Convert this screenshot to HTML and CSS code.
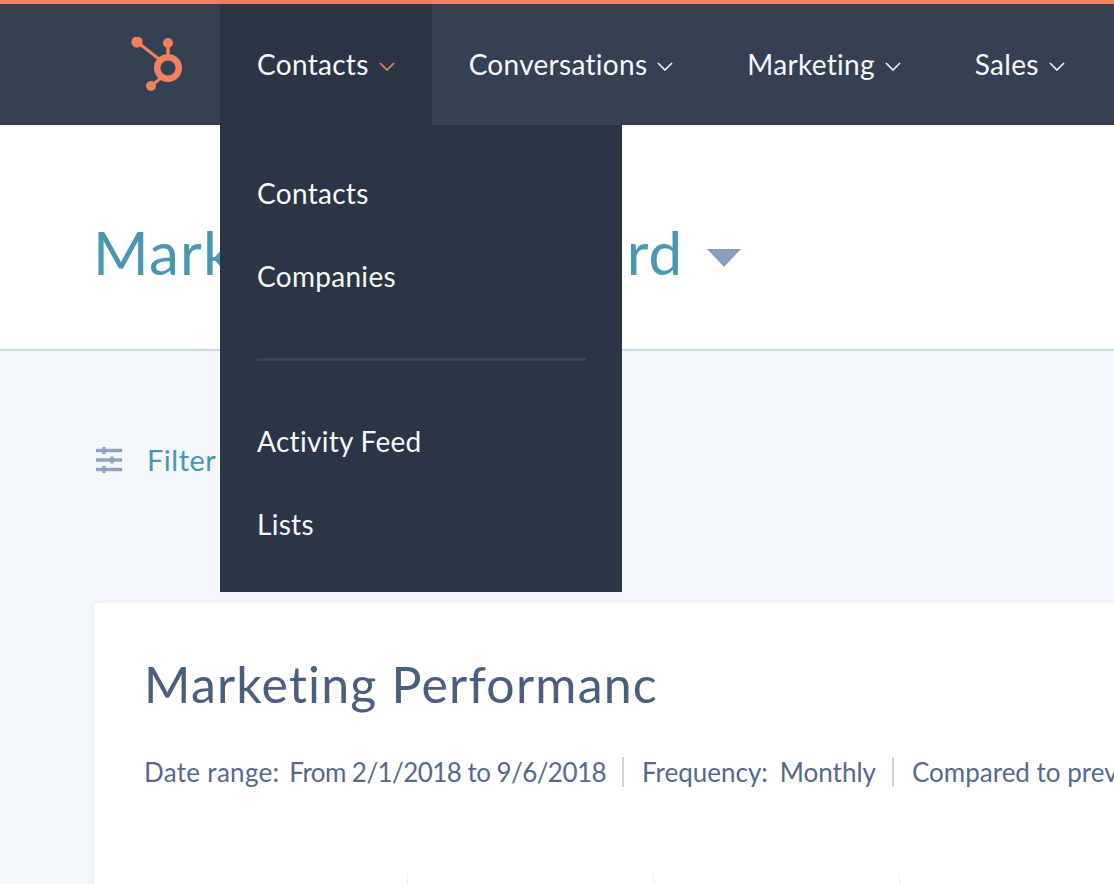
FILE: index.html
```html
<!DOCTYPE html>
<html lang="en">
<head>
<meta charset="utf-8">
<title>Marketing Dashboard</title>
<link rel="stylesheet" href="styles.css">
</head>
<body>
<header class="nav">
  <div class="nav-logo">
    <svg class="logo" width="56" height="56" viewBox="0 0 56 56">
      <g fill="#f2805f" stroke="none">
        <circle cx="7" cy="5" r="5.6"/>
        <circle cx="38" cy="6" r="5"/>
        <circle cx="21" cy="49" r="5"/>
      </g>
      <g stroke="#f2805f" fill="none">
        <path d="M7 5 29 22" stroke-width="3"/>
        <path d="M38 6V20" stroke-width="3.4"/>
        <path d="M21 49 31 41" stroke-width="3"/>
        <circle cx="38" cy="31" r="10.8" stroke-width="6.4"/>
      </g>
    </svg>
  </div>
  <div class="nav-item active">
    <span>Contacts</span>
    <svg class="chev" width="16" height="9" viewBox="0 0 16 9"><path d="M1 1l7 7 7-7"/></svg>
    <div class="menu">
      <a class="menu-item">Contacts</a>
      <a class="menu-item">Companies</a>
      <div class="menu-divider"></div>
      <a class="menu-item">Activity Feed</a>
      <a class="menu-item">Lists</a>
    </div>
  </div>
  <div class="nav-item">
    <span>Conversations</span>
    <svg class="chev" width="16" height="9" viewBox="0 0 16 9"><path d="M1 1l7 7 7-7"/></svg>
  </div>
  <div class="nav-item">
    <span>Marketing</span>
    <svg class="chev" width="16" height="9" viewBox="0 0 16 9"><path d="M1 1l7 7 7-7"/></svg>
  </div>
  <div class="nav-item">
    <span>Sales</span>
    <svg class="chev" width="16" height="9" viewBox="0 0 16 9"><path d="M1 1l7 7 7-7"/></svg>
  </div>
</header>

<section class="title-bar">
  <h1 class="page-title">Marketing Dashboard</h1>
  <svg class="caret" width="34" height="18" viewBox="0 0 34 18"><path d="M0 0H34L17 18Z"/></svg>
</section>

<main class="content">
  <div class="filter-row">
    <svg class="filter-icon" width="26" height="26" viewBox="0 0 26 26">
      <path d="M0 3.5H26M0 13H26M0 22.5H26"/>
      <path class="knob" d="M8 0V7M16 9.5V16.5M8 19V26"/>
    </svg>
    <span class="filter-label">Filter</span>
  </div>
  <article class="card">
    <h2 class="card-title">Marketing Performanc</h2>
    <div class="meta">
      <span><span class="meta-label">Date range:</span><span class="meta-date">From 2/1/2018 to 9/6/2018</span></span>
      <span class="meta-item">Frequency:<span class="meta-value">Monthly</span></span>
      <span class="meta-item">Compared to previous period</span>
    </div>
    <div class="ticks">
      <i class="tick"></i><i class="tick"></i><i class="tick"></i>
    </div>
  </article>
</main>
</body>
</html>
```

FILE: styles.css
```css
* { box-sizing: border-box; }
html, body { height: 100%; }
body {
  margin: 0;
  overflow: hidden;
  background: #f5f8fa;
  font-family: "Lato", "Open Sans", sans-serif;
}
.nav {
  display: flex;
  height: 125px;
  background: #334152;
  border-top: 4px solid #f2805f;
  color: #f5f8fa;
  font-size: 28px;
  letter-spacing: .3px;
  white-space: nowrap;
}
.nav-logo {
  width: 220px;
  display: flex;
  align-items: flex-start;
  padding: 33px 0 0 130px;
}
.logo { display: block; }
.nav-item {
  position: relative;
  display: flex;
  align-items: center;
  gap: 10px;
  padding: 0 37px 2px;
}
.nav-item.active { background: #2a3646; }
.chev { display: block; margin-top: 6px; }
.chev path { fill: none; stroke: #eaf0f6; stroke-width: 1.7; }
.active .chev path { stroke: #f2805f; }
.menu {
  position: absolute;
  top: 121px;
  left: 0;
  width: 402px;
  padding: 27px 36px 27px 37px;
  background: #2a3646;
  z-index: 2;
}
.menu-item {
  display: flex;
  align-items: center;
  height: 82.5px;
}
.menu-divider {
  height: 3px;
  margin: 41px 0 39px;
  background: #34465a;
}
.title-bar {
  display: flex;
  align-items: center;
  height: 226px;
  padding: 30px 0 0 93px;
  background: #fff;
  border-bottom: 2px solid #cbd6e2;
}
.page-title {
  margin: 0;
  font-size: 60px;
  font-weight: 400;
  letter-spacing: 1.15px;
  color: #4a97b2;
}
.caret { margin: 12px 0 0 24px; }
.caret path { fill: #88a0bd; }
.content { padding: 0 0 0 94px; }
.filter-row {
  display: flex;
  align-items: center;
  height: 252px;
  padding: 0 0 35px 2px;
  gap: 25px;
}
.filter-icon { display: block; }
.filter-icon path { fill: none; stroke: #8ea2bf; stroke-width: 3.4; }
.filter-label {
  font-size: 29px;
  letter-spacing: .5px;
  color: #4a97b2;
}
.card {
  height: 281px;
  padding: 47px 0 0 50px;
  overflow: hidden;
  background: #fff;
  border-radius: 5px 0 0 0;
  box-shadow: -2px 0 6px rgba(203, 214, 226, .3);
}
.card-title {
  margin: 0;
  font-size: 50px;
  line-height: 68px;
  font-weight: 400;
  letter-spacing: 1.2px;
  color: #4a5f7b;
  white-space: nowrap;
}
.meta {
  display: flex;
  margin-top: 39px;
  font-size: 26px;
  line-height: 30px;
  color: #54698d;
  white-space: nowrap;
}
.meta-label { letter-spacing: .3px; }
.meta-date { margin-left: 10px; letter-spacing: -.56px; }
.meta-value { margin-left: 12px; }
.meta-item {
  margin-left: 16px;
  padding-left: 18px;
  border-left: 2px solid #cbd6e2;
}
.ticks {
  display: flex;
  margin: 86px 0 0 263px;
  gap: 245px;
}
.tick {
  display: block;
  width: 1px;
  height: 12px;
  background: #edf1f5;
}
```
